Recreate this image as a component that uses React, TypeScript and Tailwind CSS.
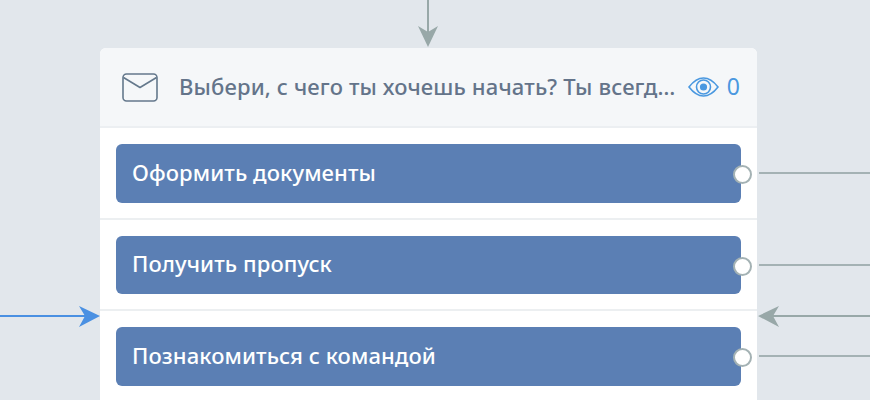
import React from 'react';

const OPTIONS = ['Оформить документы', 'Получить пропуск', 'Познакомиться с командой'];

const App: React.FC = () => {
  return (
    <div className="relative w-[870px] h-[400px] overflow-hidden bg-[#e2e7ec] pt-[48px] pl-[100px]" style={{ fontFamily: '"Noto Sans", sans-serif' }}>
      {/* Node card */}
      <div className="w-[657px] rounded-t-[6px] bg-white">
        <div className="h-[80px] flex items-center pl-[22px] pr-[17px] rounded-t-[6px] bg-[#f5f7f9] border-b-2 border-[#eceff2]">
          <svg className="w-[36px] h-[29px] shrink-0" viewBox="0 0 36 29" fill="none" stroke="#64788c" strokeWidth="1.6">
            <rect x="1" y="1" width="34" height="27" rx="3.5" />
            <path d="M1.5 4.5 L18 14.5 L34.5 4.5" strokeLinejoin="round" />
          </svg>
          <span className="ml-[21px] mb-[2px] flex-1 truncate text-[22px] tracking-[0.15px] font-medium text-[#64748a]">Выбери, с чего ты хочешь начать? Ты всегда сможешь вернуться</span>
          <svg className="ml-[11px] w-[31px] h-[20px] shrink-0" viewBox="0 0 31 20" fill="none" stroke="#4a98e0" strokeWidth="1.6">
            <path d="M1 10 C6 3.5 10.5 1 15.5 1 C20.5 1 25 3.5 30 10 C25 16.5 20.5 19 15.5 19 C10.5 19 6 16.5 1 10 Z" />
            <circle cx="15.5" cy="10" r="7" />
            <circle cx="15.5" cy="10" r="3.6" fill="#4a98e0" stroke="none" />
          </svg>
          <span className="ml-[8px] mb-[2px] text-[23px] text-[#4a98e0]">0</span>
        </div>
        {OPTIONS.map((label) => (
          <div key={label} className="relative pt-[16px] px-[16px] pb-[15px] border-b-2 border-[#eceff1] last:border-b-0">
            <div className="relative h-[58.5px] flex items-center pl-[16px] pb-[2px] rounded-[6px] bg-[#5b7fb4] text-[22px] tracking-[0.1px] font-medium text-white">
              {label}
              <div className="absolute right-[-11px] top-[21px] w-[19px] h-[19px] rounded-full bg-white border-2 border-[#a4b2b4]" />
            </div>
          </div>
        ))}
      </div>

      {/* Connectors */}
      <svg className="absolute left-0 top-0 w-[870px] h-[400px]" viewBox="0 0 870 400" fill="none">
        <path d="M428 0 V42" stroke="#98a8a8" strokeWidth="2" />
        <path d="M418 26 L428 47 L438 26 L428 32 Z" fill="#98a8a8" />
        <path d="M759 173 H870 M759 265 H870 M759 356 H870" stroke="#a4b2b4" strokeWidth="2" />
        <path d="M764 316 H870" stroke="#98a8a8" strokeWidth="2" />
        <path d="M779 306 L758 316 L779 327 L773 316 Z" fill="#98a8a8" />
        <path d="M0 316 H92" stroke="#4a90e2" strokeWidth="2" />
        <path d="M79 306 L100 316 L79 327 L85 316 Z" fill="#4a90e2" />
      </svg>
    </div>
  );
};

export default App;
